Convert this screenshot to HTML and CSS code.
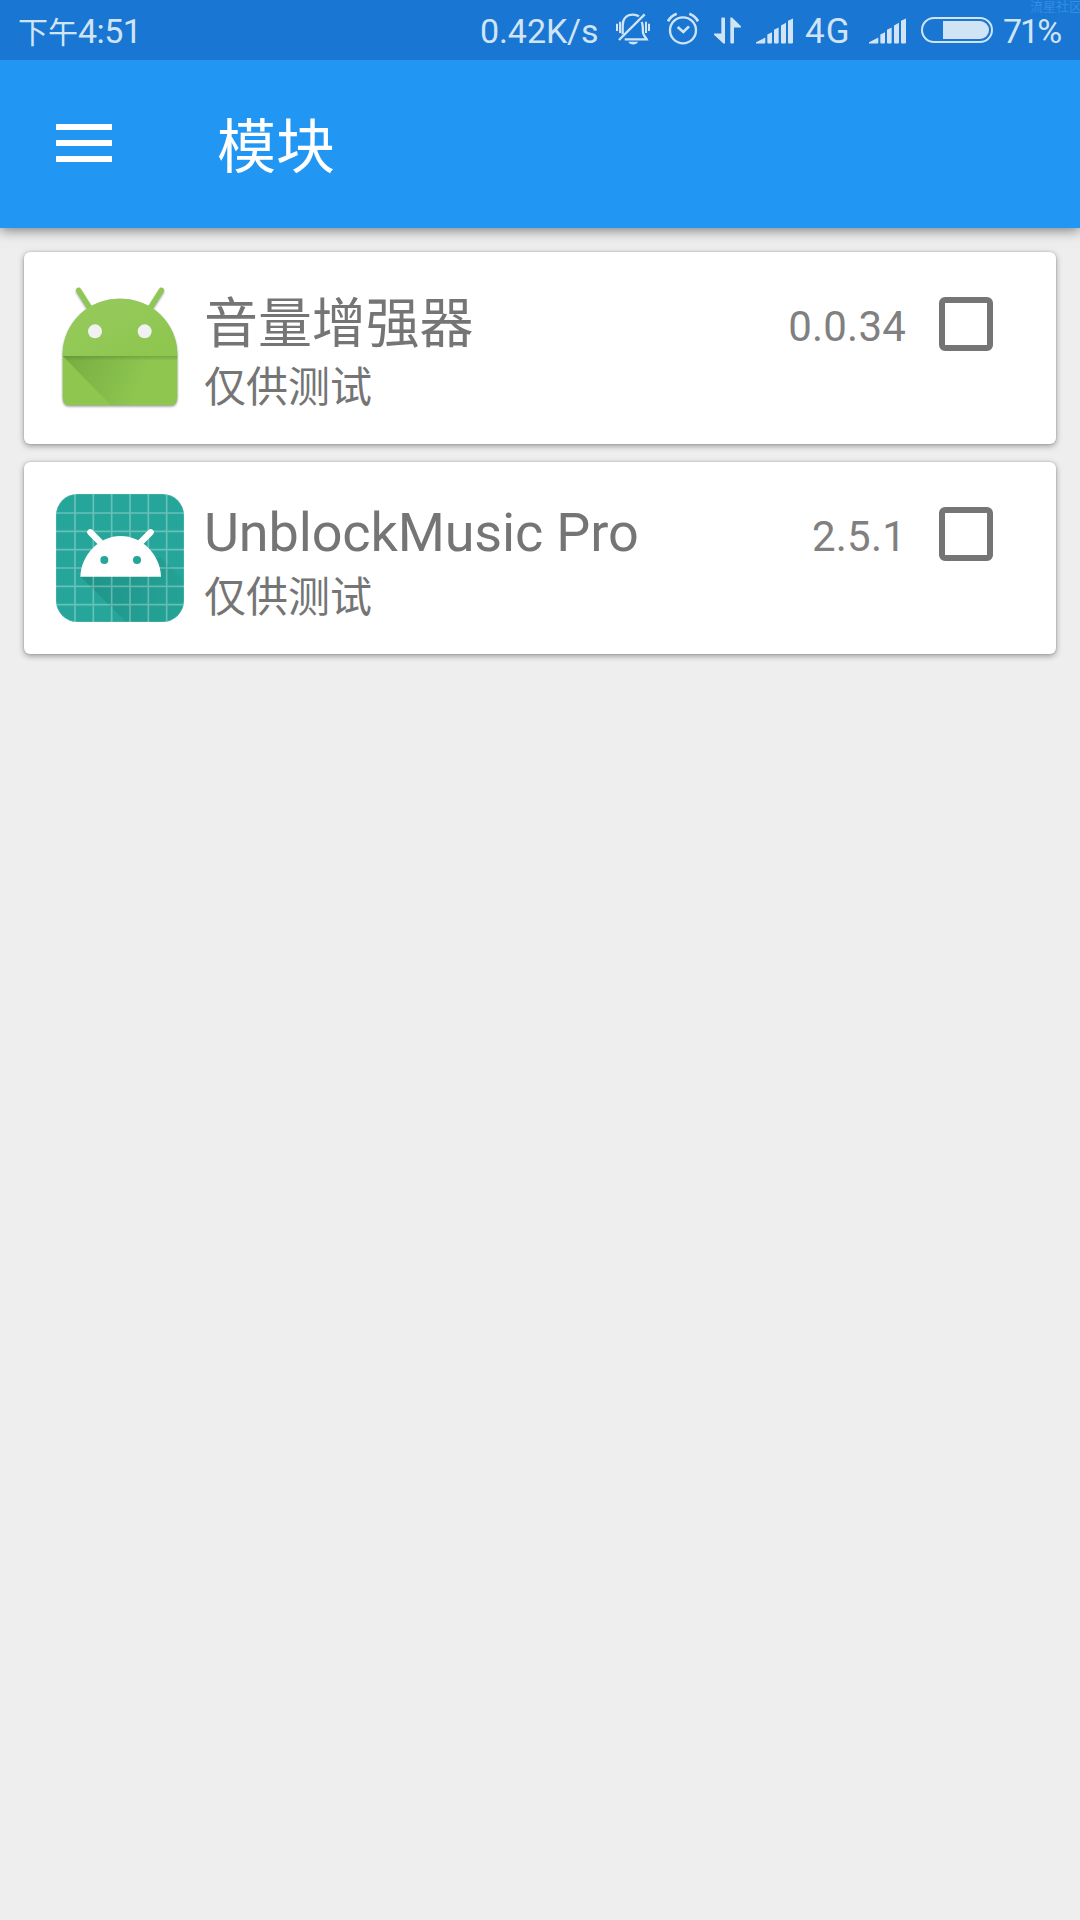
FILE: index.html
```html
<!DOCTYPE html>
<html lang="zh-CN">
<head>
<meta charset="utf-8">
<title>模块</title>
<link rel="stylesheet" href="styles.css">
</head>
<body>
<header class="status-bar">
  <span class="time">下午<span class="time-digits">4:51</span></span>
  <span class="speed">0.42K/s</span>
  <svg class="bell" viewBox="468 40 102 96" fill="none" stroke="currentColor" stroke-width="7">
    <path d="M471 72v22M480 66v34M558 66v34M567 72v22" stroke-width="6"/>
    <path d="M488 104V78C488 57 500 45 519 45C526 45 532 47 537 50"/>
    <path d="M554 44L477 121"/>
    <path d="M545 67C550 76 548 92 549 99C550 107 557 113 560 119H494"/>
    <path d="M505 126H534C530 137 509 137 505 126Z" fill="currentColor" stroke="none"/>
  </svg>
  <svg class="alarm" viewBox="621 38 96 99" fill="none" stroke="currentColor" stroke-width="7">
    <circle cx="669" cy="93" r="39"/>
    <path d="M624 66Q632 50 650 43M714 66Q706 50 688 43" stroke-width="8"/>
    <path d="M653 83L670 98L687 81" stroke-width="8"/>
  </svg>
  <svg class="arrows" viewBox="762 50 81 80" fill="currentColor">
    <path d="M784 54Q784 51 787 51H792Q795 51 795 54V129H790L762 103V99H784ZM811 51H816L843 77V81H822V126Q822 129 819 129H814Q811 129 811 126Z"/>
  </svg>
  <svg class="signal" viewBox="327 53 111 77" fill="currentColor">
    <path d="M327 129V125L355 111V126Q355 129 352 129ZM361 102L375 95V126Q375 129 372 129H364Q361 129 361 126ZM381 88L395 81V126Q395 129 392 129H384Q381 129 381 126ZM402 75L417 67V126Q417 129 414 129H405Q402 129 402 126ZM423 61L438 54V126Q438 129 435 129H426Q423 129 423 126Z"/>
  </svg>
  <span class="network">4G</span>
  <svg class="signal signal-second" viewBox="327 53 111 77" fill="currentColor">
    <path d="M327 129V125L355 111V126Q355 129 352 129ZM361 102L375 95V126Q375 129 372 129H364Q361 129 361 126ZM381 88L395 81V126Q395 129 392 129H384Q381 129 381 126ZM402 75L417 67V126Q417 129 414 129H405Q402 129 402 126ZM423 61L438 54V126Q438 129 435 129H426Q423 129 423 126Z"/>
  </svg>
  <svg class="battery" viewBox="483 51 216 78">
    <rect x="486" y="54" width="210" height="72" rx="36" fill="none" stroke="currentColor" stroke-width="6"/>
    <path d="M549 63H660A27 27 0 0 1 660 117H549Z" fill="currentColor"/>
  </svg>
  <span class="percent">71%</span>
  <span class="watermark">流星社区</span>
</header>

<nav class="app-bar">
  <svg class="menu" viewBox="0 0 56 38" fill="#fff"><path d="M0 0h56v6H0zM0 16h56v6H0zM0 32h56v6H0z"/></svg>
  <h1 class="title">模块</h1>
</nav>

<main class="modules">
  <article class="card">
    <svg class="app-icon" viewBox="126 168 408 432">
      <defs>
        <linearGradient id="body" x1="0" y1="0" x2="1" y2="1"><stop offset="0" stop-color="#97cb5e"/><stop offset="1" stop-color="#8dc54d"/></linearGradient>
        <linearGradient id="fold" gradientUnits="userSpaceOnUse" x1="170" y1="410" x2="390" y2="500"><stop offset="0" stop-color="#33691e" stop-opacity=".26"/><stop offset="1" stop-color="#33691e" stop-opacity="0"/></linearGradient>
        <linearGradient id="seam" x1="0" y1="0" x2="0" y2="1"><stop offset="0" stop-color="#33691e" stop-opacity=".3"/><stop offset="1" stop-color="#33691e" stop-opacity="0"/></linearGradient>
      </defs>
      <g class="robot">
        <path d="M206 211L242 268M454 211L418 268" stroke="#8fc753" stroke-width="16" stroke-linecap="round"/>
        <path d="M158 400C160 308 235 236 330 236C425 236 500 308 502 400V533Q502 556 479 556H181Q158 556 158 533Z" fill="#8ec650"/>
      </g>
      <path d="M158 408C158 308 235 236 330 236C425 236 502 308 502 408Z" fill="url(#body)"/>
      <path d="M158 408H502V533Q502 556 479 556H303Z" fill="url(#fold)"/>
      <path d="M158 408H502V422H172Z" fill="url(#seam)"/>
      <circle cx="255" cy="334" r="21" fill="#f1f1f1"/><circle cx="404" cy="334" r="21" fill="#f1f1f1"/>
    </svg>
    <div class="info">
      <h2 class="name">音量增强器</h2>
      <p class="description">仅供测试</p>
    </div>
    <span class="version">0.0.34</span>
    <span class="checkbox" role="checkbox" aria-checked="false"></span>
  </article>

  <article class="card">
    <svg class="app-icon" viewBox="126 138 408 432">
      <defs>
        <clipPath id="tile"><rect x="138" y="162" width="384" height="384" rx="64"/></clipPath>
        <linearGradient id="cast" gradientUnits="userSpaceOnUse" x1="230" y1="400" x2="500" y2="530"><stop offset="0" stop-color="#004d40" stop-opacity=".2"/><stop offset="1" stop-color="#004d40" stop-opacity=".04"/></linearGradient>
      </defs>
      <g clip-path="url(#tile)">
        <path d="M138 162H522V546H138Z" fill="#26a69a"/>
        <path d="M212 410L452 352L522 422V546H348Z" fill="url(#cast)"/>
        <path d="M195 162V546M250 162V546M305 162V546M360 162V546M415 162V546M470 162V546M138 219H522M138 274H522M138 329H522M138 384H522M138 439H522M138 494H522" stroke="#fff" stroke-opacity=".3" stroke-width="5"/>
        <rect x="139" y="163" width="382" height="382" rx="63" fill="none" stroke="#fff" stroke-opacity=".2" stroke-width="2"/>
      </g>
      <path d="M241 277L276 312M422 277L387 312" stroke="#fff" stroke-width="19" stroke-linecap="round"/>
      <path d="M211 410C213 345 267 288 332 288C397 288 451 345 453 410Z" fill="#fff"/>
      <circle cx="283" cy="360" r="12" fill="#26a69a"/><circle cx="381" cy="360" r="12" fill="#26a69a"/>
    </svg>
    <div class="info">
      <h2 class="name name-latin">UnblockMusic Pro</h2>
      <p class="description">仅供测试</p>
    </div>
    <span class="version">2.5.1</span>
    <span class="checkbox" role="checkbox" aria-checked="false"></span>
  </article>
</main>
</body>
</html>
```
FILE: styles.css
```css
* {
  box-sizing: border-box;
}

body {
  margin: 0;
  min-height: 1920px;
  background: #eeeeee;
  font-family: Roboto, "Noto Sans CJK SC", sans-serif;
}

h1, h2, p {
  margin: 0;
  font-weight: 400;
}

svg {
  display: block;
  flex: none;
}

.status-bar {
  position: relative;
  z-index: 1;
  display: flex;
  align-items: flex-start;
  height: 60px;
  padding: 13px 0 0 18px;
  background: #1976d2;
  color: #d1e4f6;
  font-size: 34px;
  line-height: 34px;
  white-space: nowrap;
}

.time {
  width: 462px;
  font-family: "Noto Sans CJK SC", sans-serif;
  font-size: 30px;
}

.time-digits {
  font-family: Roboto, sans-serif;
  font-size: 34px;
  letter-spacing: -0.6px;
}

.speed {
  width: 136px;
  margin-top: 1px;
  letter-spacing: -0.1px;
}

.bell {
  width: 34px;
  height: 32px;
}

.alarm {
  width: 32px;
  height: 33px;
  margin: -1px 0 0 17px;
}

.arrows {
  width: 27px;
  height: 27px;
  margin: 4px 0 0 15px;
}

.signal {
  width: 37px;
  height: 26px;
  margin: 5px 0 0 15px;
}

.network {
  width: 64px;
  margin-top: 2px;
  padding-left: 12px;
  font-size: 35px;
  letter-spacing: 1px;
}

.signal-second {
  margin-left: 12px;
}

.battery {
  width: 72px;
  height: 26px;
  margin: 4px 10px 0 15px;
}

.percent {
  margin-top: 1px;
  letter-spacing: -2px;
}

.watermark {
  position: absolute;
  top: 0;
  right: -2px;
  color: #318de6;
  font-size: 13px;
  line-height: 13px;
}

.app-bar {
  display: flex;
  align-items: flex-start;
  gap: 105px;
  height: 168px;
  padding: 52px 0 0 56px;
  background: #2196f3;
  box-shadow: 0 2px 12px rgba(0, 0, 0, 0.5);
}

.menu {
  width: 56px;
  height: 38px;
  margin-top: 12px;
}

.title {
  color: #fff;
  font-size: 59px;
  line-height: 72px;
}

.modules {
  display: flex;
  flex-direction: column;
  gap: 18px;
  padding: 24px;
}

.card {
  display: flex;
  align-items: flex-start;
  height: 192px;
  padding: 24px 63px 0 28px;
  border-radius: 6px;
  background: #fff;
  box-shadow: 0 2px 6px rgba(0, 0, 0, 0.36), 0 0 2px rgba(0, 0, 0, 0.2);
}

.app-icon {
  width: 136px;
  height: 144px;
}

.robot {
  filter: drop-shadow(0 4px 3px rgba(0, 0, 0, 0.4));
}

.info {
  flex: 1;
  padding: 17px 0 0 16px;
  color: #757575;
}

.name {
  font-size: 54px;
  line-height: 64px;
  letter-spacing: -0.1px;
}

.name-latin {
  height: 64px;
  line-height: 60px;
  letter-spacing: -0.15px;
}

.description {
  font-size: 42px;
  line-height: 62px;
}

.version {
  margin: 26px 33px 0 0;
  color: #808080;
  font-size: 42px;
  line-height: 50px;
  letter-spacing: 0.2px;
}

.checkbox {
  width: 54px;
  height: 54px;
  margin-top: 21px;
  border: 6px solid #757575;
  border-radius: 6px;
}
```
